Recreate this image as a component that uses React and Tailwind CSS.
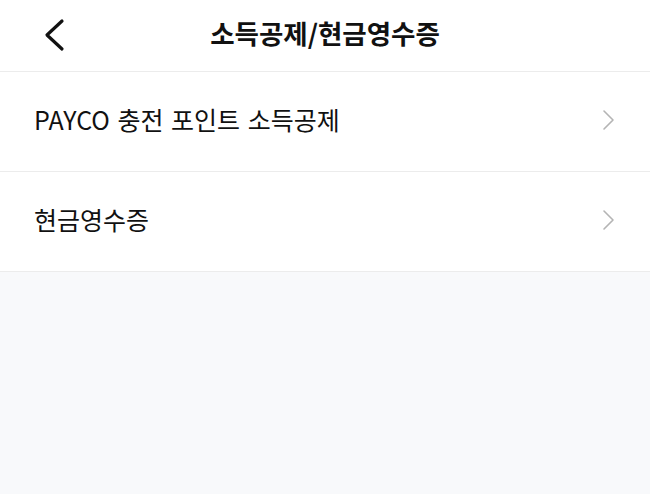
const font = { fontFamily: '"Noto Sans CJK KR", "Noto Sans", sans-serif' };

const Chevron = () => (
  <svg width="14" height="22" viewBox="0 0 14 22" fill="none" className="shrink-0 mb-[4px]">
    <path d="M2 2l9 9-9 9" stroke="#b4b4b4" strokeWidth="1.6" strokeLinecap="round" strokeLinejoin="round" />
  </svg>
);

const rows = ['PAYCO 충전 포인트 소득공제', '현금영수증'];

export default function App() {
  return (
    <div className="w-[650px] h-[494px] bg-[#f8f9fb] flex flex-col text-[#111]" style={font}>
      <header className="relative h-[72px] bg-white border-b border-[#ececec] flex items-center justify-center shrink-0">
        <button className="absolute left-[42px] top-[18px]">
          <svg width="24" height="34" viewBox="0 0 24 34" fill="none">
            <path d="M20 3L5 17l15 14" stroke="#111" strokeWidth="3.2" strokeLinecap="round" strokeLinejoin="round" />
          </svg>
        </button>
        <h1 className="text-[26.5px] font-bold leading-none pb-[4px]">소득공제/현금영수증</h1>
      </header>
      <ul className="bg-white">
        {rows.map((label) => (
          <li key={label} className="h-[100px] flex items-center justify-between pl-[34px] pr-[34px] border-b border-[#ececec]">
            <span className="text-[25px] leading-none pb-[5px] [word-spacing:2px]">{label}</span>
            <Chevron />
          </li>
        ))}
      </ul>
    </div>
  );
}
